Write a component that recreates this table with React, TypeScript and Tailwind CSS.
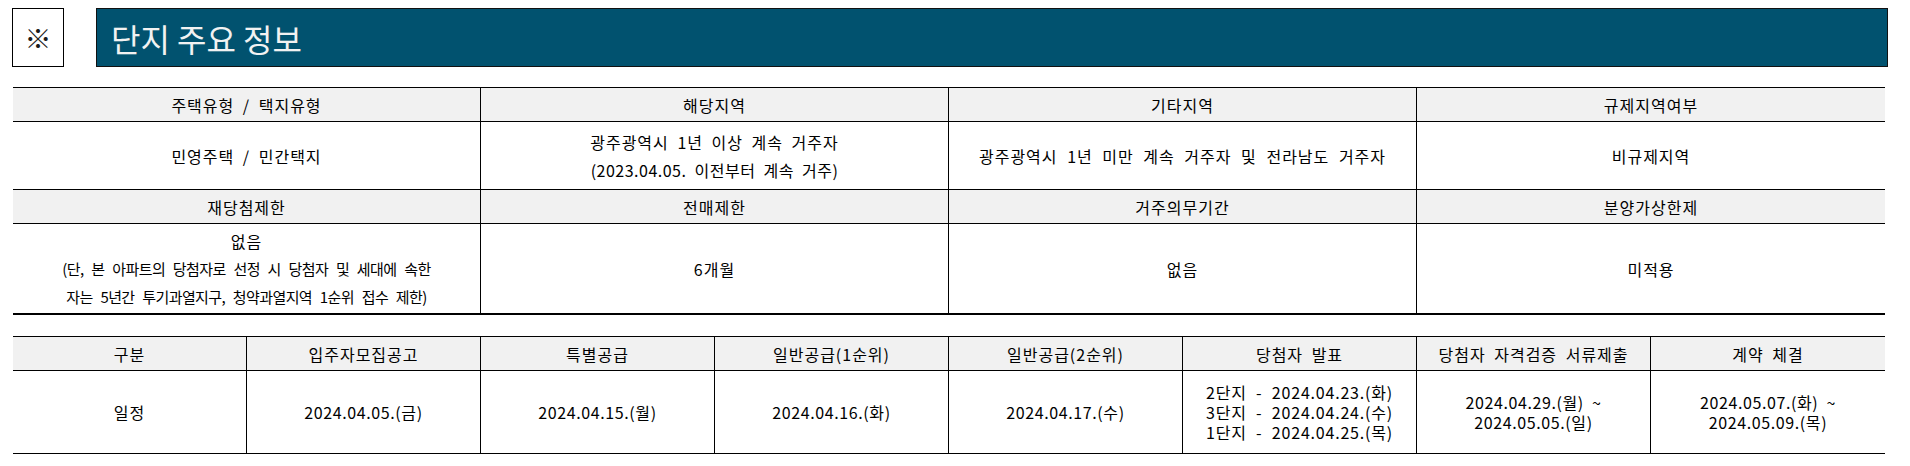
import { ReactNode } from 'react';

const head = 'flex items-center justify-center bg-[#f1f1f1] text-[16px] tracking-[1px] [word-spacing:4px]';
const cell = 'flex flex-col items-center justify-center text-center';

function InfoGrid({ cols, heads, values, bodyHeight, last }: { cols: string; heads: string[]; values: ReactNode[]; bodyHeight: string; last?: boolean }) {
  return (
    <>
      <div className={`grid ${cols} h-[34px] border-b border-black`}>
        {heads.map((h, i) => (
          <div key={h} className={`${head} ${i < heads.length - 1 ? 'border-r border-black' : ''}`}>
            {h}
          </div>
        ))}
      </div>
      <div className={`grid ${cols} ${bodyHeight} ${last ? 'border-b-2' : 'border-b'} border-black`}>
        {values.map((v, i) => (
          <div key={i} className={`${cell} ${i < values.length - 1 ? 'border-r border-black' : ''}`}>
            {v}
          </div>
        ))}
      </div>
    </>
  );
}

const schedule = [
  ['구분', '일정'],
  ['입주자모집공고', '2024.04.05.(금)'],
  ['특별공급', '2024.04.15.(월)'],
  ['일반공급(1순위)', '2024.04.16.(화)'],
  ['일반공급(2순위)', '2024.04.17.(수)'],
];

export default function App() {
  return (
    <div className="w-[1910px] h-[466px] bg-white text-black font-['Noto_Sans_CJK_KR','Noto_Sans',sans-serif] overflow-hidden">
      {/* title */}
      <div className="flex pt-[8px] pl-[12px] h-[67px]">
        <div className="w-[52px] h-[59px] border border-black flex items-center justify-center text-[27px] font-bold leading-none text-[#1a1a1a]">
          ※
        </div>
        <div className="ml-[32px] w-[1792px] h-[59px] border border-[#111] bg-[#01526f] flex items-center pl-[14px]">
          <span className="text-[32px] leading-none text-[#f2f2f2]">단지 주요 정보</span>
        </div>
      </div>

      {/* 단지 정보 */}
      <div className="ml-[13px] mt-[20px] w-[1872px] border-t border-black">
        <InfoGrid
          cols="grid-cols-4"
          heads={['주택유형 / 택지유형', '해당지역', '기타지역', '규제지역여부']}
          bodyHeight="h-[68px]"
          values={[
            <span className="text-[16px] tracking-[1px] [word-spacing:4px]">민영주택 / 민간택지</span>,
            <div className="text-[16px] leading-[28px] tracking-[1px] [word-spacing:4px]">
              <div>광주광역시 1년 이상 계속 거주자</div>
              <div className="tracking-[0.5px]">(2023.04.05. 이전부터 계속 거주)</div>
            </div>,
            <span className="text-[16px] tracking-[1px] [word-spacing:5px]">광주광역시 1년 미만 계속 거주자 및 전라남도 거주자</span>,
            <span className="text-[16px] tracking-[1px]">비규제지역</span>,
          ]}
        />
        <InfoGrid
          cols="grid-cols-4"
          heads={['재당첨제한', '전매제한', '거주의무기간', '분양가상한제']}
          bodyHeight="h-[91px]"
          last
          values={[
            <div className="leading-[28px]">
              <div className="text-[16px] tracking-[1px]">없음</div>
              <div className="text-[15px] tracking-[-0.6px] [word-spacing:5px]">(단, 본 아파트의 당첨자로 선정 시 당첨자 및 세대에 속한</div>
              <div className="text-[15px] tracking-[-0.6px] [word-spacing:5px]">자는 5년간 투기과열지구, 청약과열지역 1순위 접수 제한)</div>
            </div>,
            <span className="text-[16px] tracking-[1px]">6개월</span>,
            <span className="text-[16px] tracking-[1px]">없음</span>,
            <span className="text-[16px] tracking-[1px]">미적용</span>,
          ]}
        />
      </div>

      {/* 공급 일정 */}
      <div className="ml-[13px] mt-[21px] w-[1872px] border-t border-black">
        <InfoGrid
          cols="grid-cols-8"
          heads={[...schedule.map((s) => s[0]), '당첨자 발표', '당첨자 자격검증 서류제출', '계약 체결']}
          bodyHeight="h-[83px]"
          values={[
            ...schedule.map((s, i) => (
              <span key={i} className={`text-[16px] ${i === 0 ? 'tracking-[1px]' : 'tracking-[0.6px]'}`}>
                {s[1]}
              </span>
            )),
            <div className="text-[16px] leading-[20px] tracking-[0.8px] [word-spacing:5px]">
              <div>2단지 - 2024.04.23.(화)</div>
              <div>3단지 - 2024.04.24.(수)</div>
              <div>1단지 - 2024.04.25.(목)</div>
            </div>,
            <div className="text-[16px] leading-[20px] tracking-[0.6px] [word-spacing:4px]">
              <div>2024.04.29.(월) ~</div>
              <div>2024.05.05.(일)</div>
            </div>,
            <div className="text-[16px] leading-[20px] tracking-[0.6px] [word-spacing:4px]">
              <div>2024.05.07.(화) ~</div>
              <div>2024.05.09.(목)</div>
            </div>,
          ]}
        />
      </div>
    </div>
  );
}
